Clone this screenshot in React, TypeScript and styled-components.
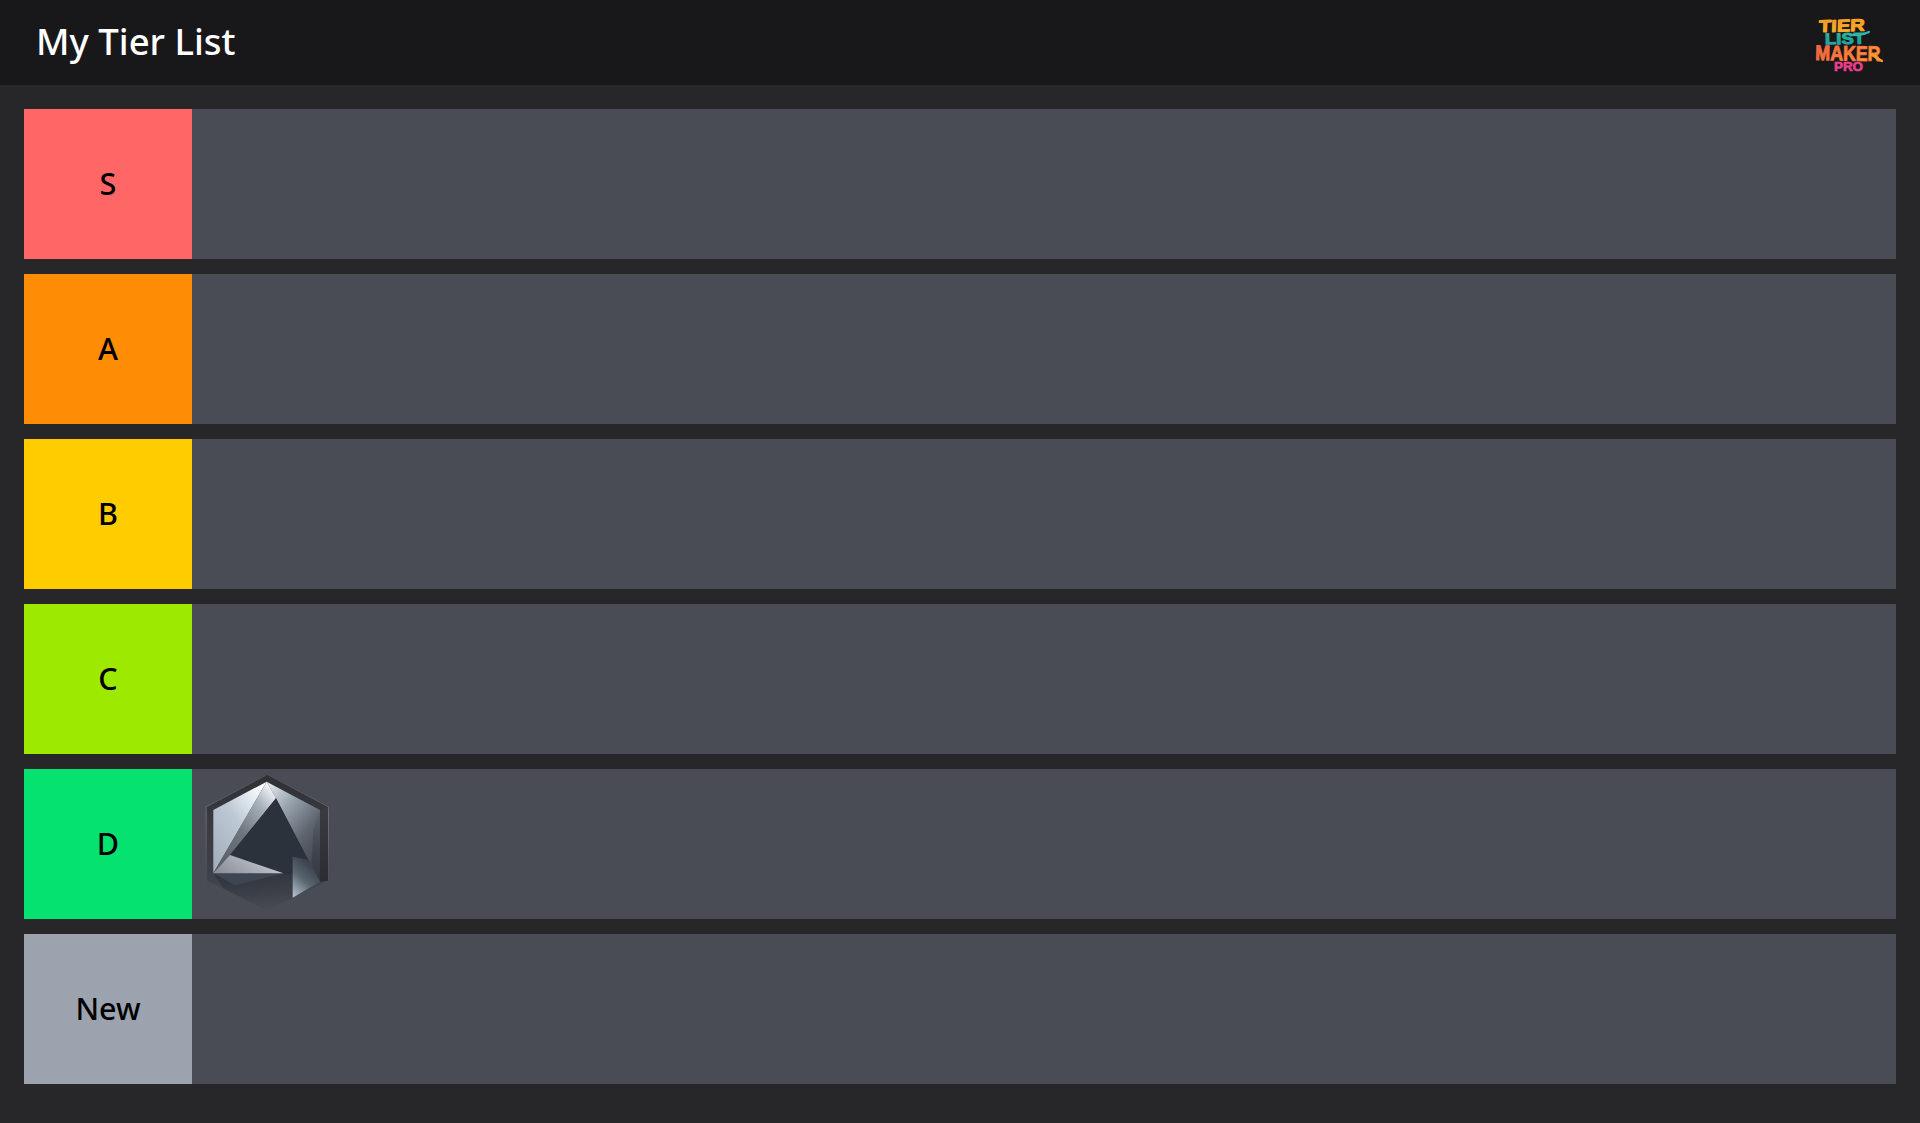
import React from "react";
import styled, { createGlobalStyle } from "styled-components";

const Global = createGlobalStyle`
  html, body { margin: 0; padding: 0; background: #27272a; }
  body { font-family: "Noto Sans", "Open Sans", sans-serif; }
`;

const Page = styled.div`
  width: 1920px;
  height: 1123px;
  overflow: hidden;
  background: #27272a;
  display: flex;
  flex-direction: column;
`;

const Header = styled.header`
  height: 85px;
  flex: none;
  box-sizing: border-box;
  padding: 0 30px 0 36px;
  background: #18181b;
  display: flex;
  align-items: center;
  justify-content: space-between;
`;

const Title = styled.h1`
  margin: 0 0 2px;
  font-size: 36.5px;
  line-height: 83px;
  font-weight: 500;
  color: #ffffff;
`;

const Board = styled.main`
  padding: 24px 24px 0;
  display: flex;
  flex-direction: column;
  gap: 15px;
`;

const Row = styled.section`
  height: 150px;
  display: flex;
  background: #4a4c55;
`;

const Label = styled.div<{ $color: string }>`
  width: 168px;
  flex: none;
  box-sizing: border-box;
  padding-bottom: 2px;
  background: ${(p) => p.$color};
  color: #000;
  font-size: 30.5px;
  font-weight: 500;
  display: flex;
  align-items: center;
  justify-content: center;
`;

const Items = styled.div`
  flex: 1;
  display: flex;
  align-items: flex-start;
`;

const BadgeSvg = styled.svg`
  width: 150px;
  height: 150px;
  display: block;
`;

const LogoSvg = styled.svg`
  width: 80px;
  height: 64px;
  display: block;
  overflow: visible;
`;

function Badge() {
  return (
    <BadgeSvg viewBox="36 27 450 450" role="img" aria-label="Rank badge">
      <defs>
        <linearGradient id="ring" x1="0" y1="0" x2="0" y2="1">
          <stop offset="0" stopColor="#2f3034" />
          <stop offset="0.35" stopColor="#3a3b41" />
          <stop offset="0.7" stopColor="#3e4047" />
          <stop offset="1" stopColor="#4a4c55" />
        </linearGradient>
        <linearGradient id="ringRight" x1="0" y1="0" x2="0" y2="1">
          <stop offset="0" stopColor="#3a3b40" />
          <stop offset="1" stopColor="#2c2d32" />
        </linearGradient>
        <linearGradient id="rim" x1="0" y1="0" x2="0" y2="1">
          <stop offset="0" stopColor="#4c4e54" />
          <stop offset="0.3" stopColor="#6d6f75" />
          <stop offset="0.75" stopColor="#4e5058" />
          <stop offset="1" stopColor="#4a4c55" />
        </linearGradient>
        <linearGradient id="left" x1="0.95" y1="0" x2="0.1" y2="1">
          <stop offset="0" stopColor="#ffffff" />
          <stop offset="0.22" stopColor="#e4ecf1" />
          <stop offset="0.5" stopColor="#bcc8d2" />
          <stop offset="1" stopColor="#a4aebd" />
        </linearGradient>
        <linearGradient id="strip" x1="0.9" y1="0" x2="0.1" y2="1">
          <stop offset="0" stopColor="#ffffff" />
          <stop offset="0.22" stopColor="#aab4bd" />
          <stop offset="0.55" stopColor="#6f7680" />
          <stop offset="1" stopColor="#585c63" />
        </linearGradient>
        <linearGradient id="right" x1="0.1" y1="0" x2="0.75" y2="1">
          <stop offset="0" stopColor="#dfe7ec" />
          <stop offset="0.3" stopColor="#98a3ae" />
          <stop offset="0.65" stopColor="#5d646e" />
          <stop offset="1" stopColor="#3b4049" />
        </linearGradient>
        <linearGradient id="rightEdge" x1="0" y1="0" x2="0" y2="1">
          <stop offset="0" stopColor="#4d535c" stopOpacity="0" />
          <stop offset="0.55" stopColor="#41464e" />
          <stop offset="1" stopColor="#33373f" />
        </linearGradient>
        <linearGradient id="shard" x1="1" y1="0.3" x2="0" y2="0.7">
          <stop offset="0" stopColor="#e8ebf0" />
          <stop offset="0.35" stopColor="#b5b9c2" />
          <stop offset="1" stopColor="#8c9099" />
        </linearGradient>
        <linearGradient id="lowerRight" x1="0.7" y1="0" x2="0.1" y2="1">
          <stop offset="0" stopColor="#2f3640" />
          <stop offset="0.55" stopColor="#59656f" />
          <stop offset="1" stopColor="#b2c0cc" />
        </linearGradient>
        <linearGradient id="base" x1="0.3" y1="0" x2="0.5" y2="1">
          <stop offset="0" stopColor="#2e343d" />
          <stop offset="0.6" stopColor="#3d4048" />
          <stop offset="1" stopColor="#494b54" />
        </linearGradient>
      </defs>
      <polygon points="262,42 447,140 447,362 262,455 77,362 77,140" fill="url(#rim)" />
      <polygon points="262,45 444,141 444,362 262,453 80,362 80,141" fill="url(#ring)" />
      <polygon points="420,150 444,141 444,362 420,365" fill="url(#ringRight)" />
      <polygon points="100,340 165,375 310,340 338,340 338,413 262,452 130,385" fill="url(#base)" />
      <polygon points="260,65 420,150 420,365 385,300 288,115" fill="url(#right)" />
      <polygon points="400,210 420,150 420,365 395,310" fill="url(#rightEdge)" />
      <polygon points="260,65 100,150 100,340" fill="url(#left)" />
      <polygon points="260,65 288,115 150,285 100,340" fill="url(#strip)" />
      <polygon points="288,115 385,300 338,290 338,342 310,340 150,285" fill="#2b323c" />
      <polygon points="100,340 310,340 165,375" fill="#3d4652" />
      <polygon points="150,285 310,340 100,340" fill="url(#shard)" />
      <polygon points="338,290 385,300 420,365 338,413" fill="url(#lowerRight)" />
    </BadgeSvg>
  );
}

function Logo() {
  const word = {
    fontFamily: "'Liberation Sans', sans-serif",
    fontWeight: 700,
    strokeLinejoin: "round" as const,
  };
  return (
    <LogoSvg viewBox="0 0 80 64" role="img" aria-label="Tier List Maker Pro">
      <defs>
        <linearGradient id="l1" x1="0" y1="0" x2="0" y2="1">
          <stop offset="0" stopColor="#f98f1f" />
          <stop offset="1" stopColor="#f6bb2c" />
        </linearGradient>
        <linearGradient id="l2" x1="0" y1="0" x2="0" y2="1">
          <stop offset="0" stopColor="#8fbe3c" />
          <stop offset="0.5" stopColor="#21a88f" />
          <stop offset="1" stopColor="#1f9fb5" />
        </linearGradient>
        <linearGradient id="l3" x1="0" y1="0" x2="1" y2="0.4">
          <stop offset="0" stopColor="#ee4f52" />
          <stop offset="0.55" stopColor="#f87f36" />
          <stop offset="1" stopColor="#fb9f2a" />
        </linearGradient>
      </defs>
      <g style={word}>
        <g transform="rotate(-2 32 16) skewX(-4)">
          <text x="10" y="20.5" fontSize="17" textLength="46" lengthAdjust="spacingAndGlyphs" fill="url(#l1)" stroke="#f7a526" strokeWidth="1">TIER</text>
        </g>
        <g transform="rotate(-1 35 28)">
          <text x="15" y="33" fontSize="15.5" textLength="40" lengthAdjust="spacingAndGlyphs" fill="url(#l2)" stroke="#22a89c" strokeWidth="1">LIST</text>
        </g>
        <g transform="rotate(1 38 42)">
          <text x="5.5" y="49.5" fontSize="21" textLength="65" lengthAdjust="spacingAndGlyphs" fill="url(#l3)" stroke="#f4733f" strokeWidth="1">MAKER</text>
        </g>
        <text x="24" y="59.5" fontSize="12.5" textLength="29" lengthAdjust="spacingAndGlyphs" fill="#ec3f8c" stroke="#ec3f8c" strokeWidth="0.6">PRO</text>
      </g>
      <path d="M40 23.5 Q50 25.5 59 21" fill="none" stroke="#2bb7b5" strokeWidth="2.2" strokeLinecap="round" />
      <path d="M62 44 L72 50" fill="none" stroke="#fb9f2a" strokeWidth="2.4" strokeLinecap="round" />
    </LogoSvg>
  );
}

const tiers = [
  { name: "S", color: "#ff6666" },
  { name: "A", color: "#ff8c05" },
  { name: "B", color: "#ffcc00" },
  { name: "C", color: "#9dea00" },
  { name: "D", color: "#05e270" },
  { name: "New", color: "#9ca3af" },
];

export default function App() {
  return (
    <Page>
      <Global />
      <Header>
        <Title>My Tier List</Title>
        <Logo />
      </Header>
      <Board>
        {tiers.map((t) => (
          <Row key={t.name}>
            <Label $color={t.color}>{t.name}</Label>
            <Items>{t.name === "D" && <Badge />}</Items>
          </Row>
        ))}
      </Board>
    </Page>
  );
}
